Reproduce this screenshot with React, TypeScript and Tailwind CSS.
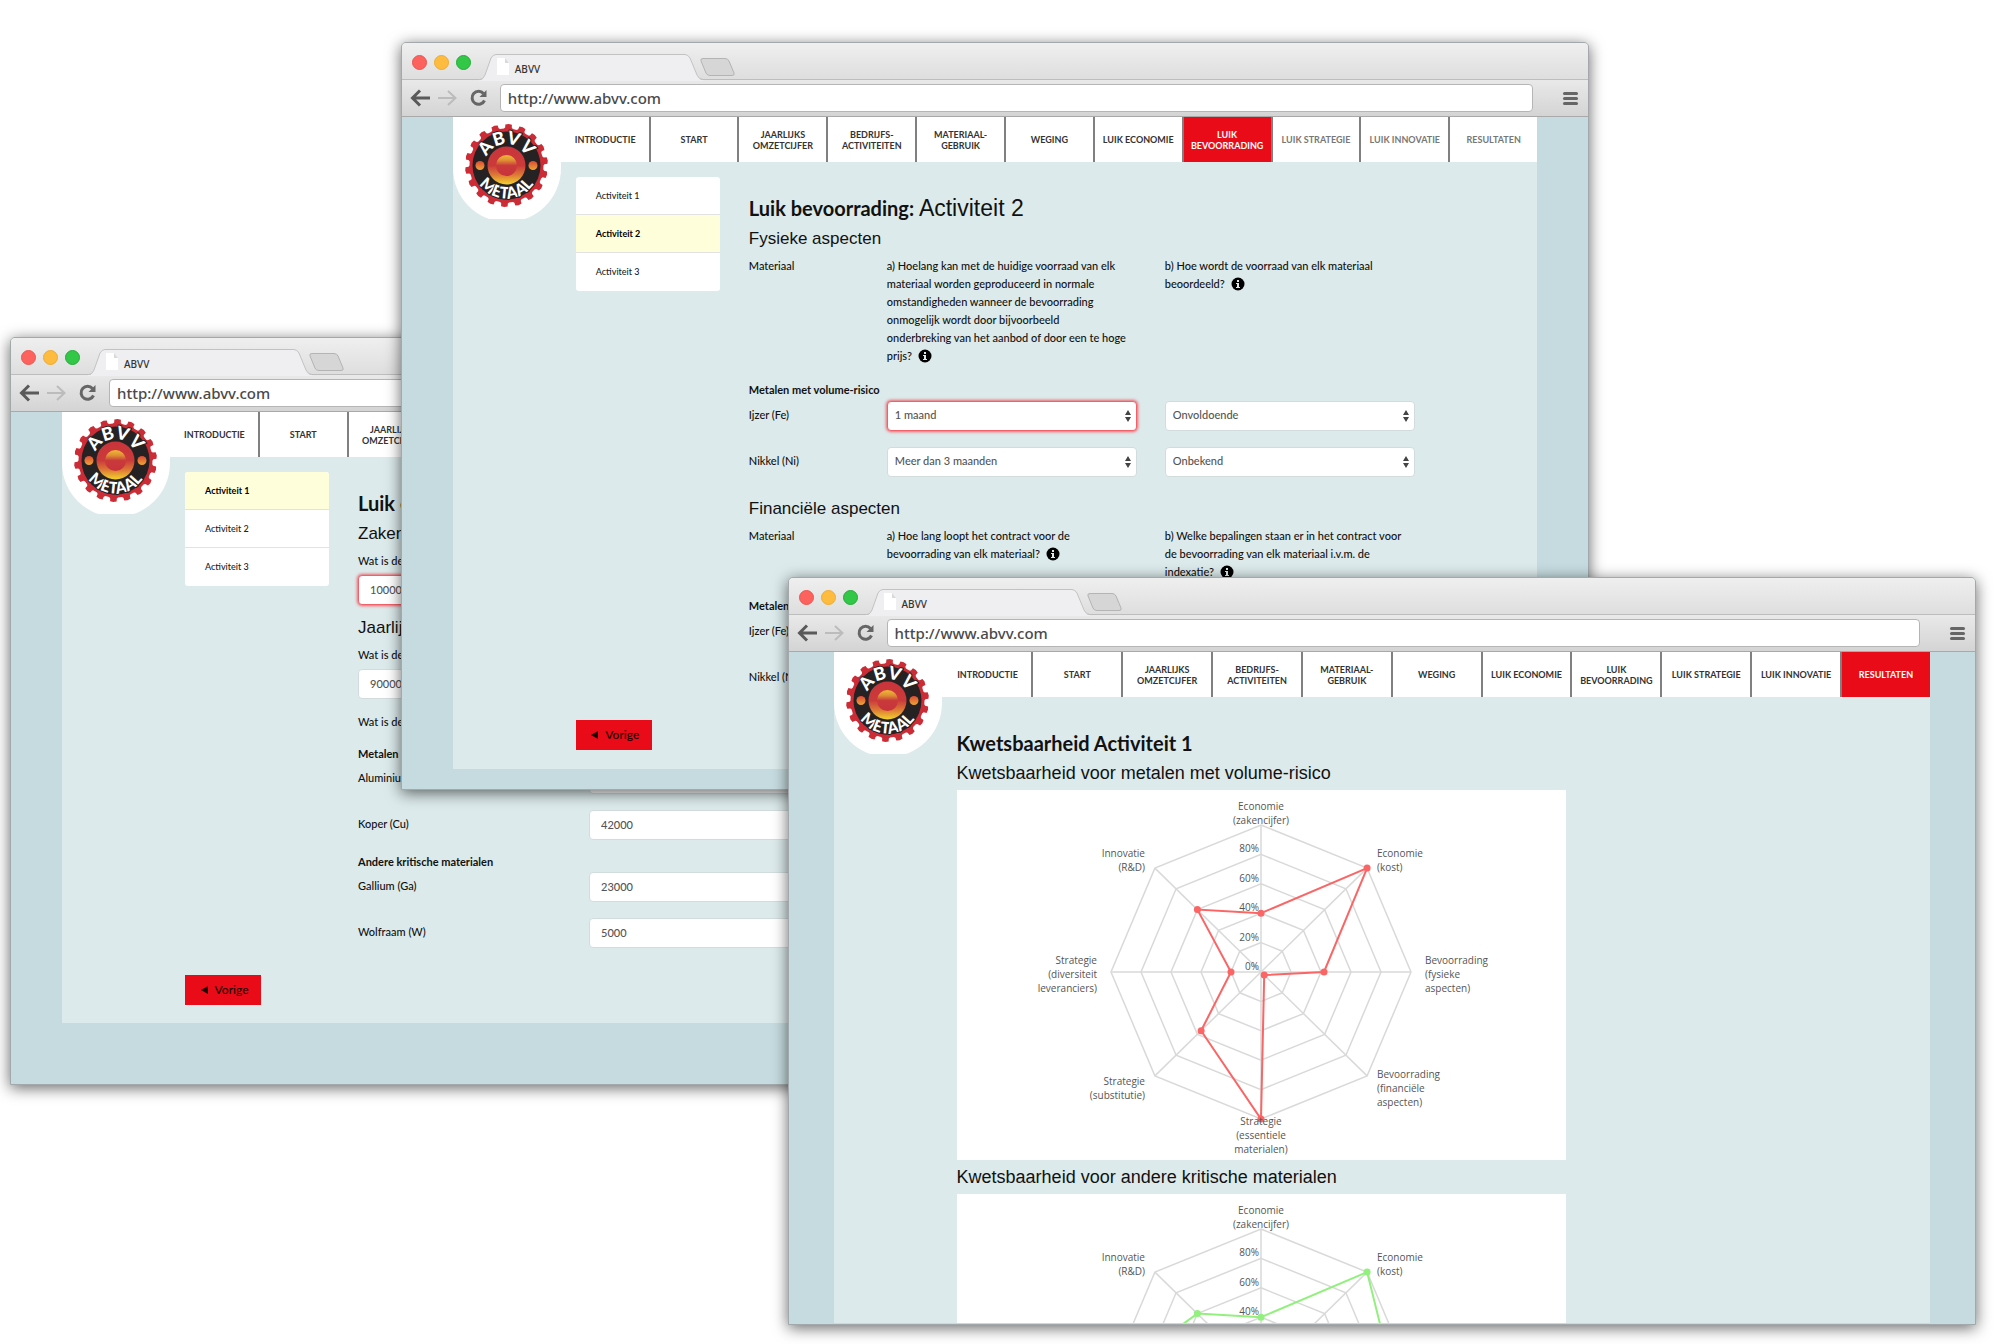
import React from "react";

const NAV = [
  ["INTRODUCTIE"],
  ["START"],
  ["JAARLIJKS", "OMZETCIJFER"],
  ["BEDRIJFS-", "ACTIVITEITEN"],
  ["MATERIAAL-", "GEBRUIK"],
  ["WEGING"],
  ["LUIK ECONOMIE"],
  ["LUIK", "BEVOORRADING"],
  ["LUIK STRATEGIE"],
  ["LUIK INNOVATIE"],
  ["RESULTATEN"],
];

function gearPath(cx: number, cy: number) {
  const teeth = 18;
  const points: string[] = [];
  const at = (r: number, deg: number) => {
    const a = (deg * Math.PI) / 180;
    return `${(cx + r * Math.sin(a)).toFixed(2)} ${(cy - r * Math.cos(a)).toFixed(2)}`;
  };
  for (let i = 0; i < teeth; i++) {
    const mid = 3 + i * 20;
    points.push(at(37, mid - 7), at(38, mid - 5), at(41, mid - 4.6), at(41.6, mid), at(41, mid + 4.6), at(38, mid + 5), at(37, mid + 7));
  }
  return `M${points.join("L")}Z`;
}

function Logo({ id }: { id: string }) {
  return (
    <svg viewBox="0 0 108 102" className="absolute left-0 top-0 h-[102px] w-[108px]" role="img" aria-label="ABVV Metaal">
      <defs>
        <linearGradient id={`${id}-disc`} x1="0" y1="0" x2="0" y2="1">
          <stop offset="0" stopColor="#c9343a" />
          <stop offset="0.5" stopColor="#cb3a3a" />
          <stop offset="0.75" stopColor="#dd7a36" />
          <stop offset="1" stopColor="#f3d22c" />
        </linearGradient>
        <linearGradient id={`${id}-core`} x1="0" y1="0" x2="0" y2="1">
          <stop offset="0" stopColor="#ecbb33" />
          <stop offset="0.25" stopColor="#e09035" />
          <stop offset="0.5" stopColor="#c93a3b" />
          <stop offset="1" stopColor="#c8333b" />
        </linearGradient>
        <linearGradient id={`${id}-dot`} x1="0" y1="0" x2="0" y2="1">
          <stop offset="0" stopColor="#dd4a35" />
          <stop offset="1" stopColor="#eda436" />
        </linearGradient>
        <path id={`${id}-top`} d="M32 48.500A21.500 21.500 0 0 1 75 48.500" />
        <path id={`${id}-bottom`} d="M20.500 48.500A33 33 0 0 0 86.500 48.500" />
        <clipPath id={`${id}-clip`}>
          <rect width="108" height="102" />
        </clipPath>
      </defs>
      <circle cx="54" cy="51" r="54" fill="#fff" clipPath={`url(#${id}-clip)`} />
      <rect width="108" height="52" fill="#fff" />
      <path d={gearPath(53.5, 48.5)} fill="#cb2c35" />
      <circle cx="53.5" cy="48.500" r="34" fill="#262223" />
      <circle cx="53.5" cy="48.500" r="19" fill={`url(#${id}-disc)`} />
      <circle cx="53.5" cy="48.500" r="10.500" fill={`url(#${id}-core)`} />
      <circle cx="27" cy="48.500" r="4.500" fill={`url(#${id}-dot)`} />
      <circle cx="80" cy="48.500" r="4.500" fill={`url(#${id}-dot)`} />
      <g fill="#fff" stroke="#262223" strokeWidth="2" strokeLinejoin="round" className="font-['Lato',sans-serif] font-black" style={{ paintOrder: "stroke" }} textAnchor="middle">
        <text fontSize="18">
          <textPath href={`#${id}-top`} startOffset="50%">ABVV</textPath>
        </text>
        <text fontSize="16">
          <textPath href={`#${id}-bottom`} startOffset="50%">METAAL</textPath>
        </text>
      </g>
    </svg>
  );
}

function BrowserBar() {
  return (
    <header className="shrink-0">
      <div className="relative flex h-[37px] items-center border-b border-[#bdbdbd] bg-linear-to-b from-[#efefef] to-[#dedede] pl-[10px]">
        <div className="flex gap-[7px] pt-[3px]">
          <span className="size-[15px] rounded-full border border-[#f0534e] bg-[#fc635e]" />
          <span className="size-[15px] rounded-full border border-[#f0ac2e] bg-[#fdbb40]" />
          <span className="size-[15px] rounded-full border border-[#1fae36] bg-[#33c748]" />
        </div>
        <svg viewBox="0 0 260 37" className="absolute left-[77px] top-px h-[37px] w-[260px]" aria-hidden="true">
          <path d="M0 36H1Q4 36 6 31L12 14Q14 10 17 10H206Q209 10 211 14L218 31Q220 36 224 36V37H0Z" fill="#efeef0" />
          <path d="M0 35.500H1Q4 35.500 6 31L12 14Q14 10.500 17 10.500H206Q209 10.500 211 14L218 31Q220 35.500 224 35.500" fill="none" stroke="#c2c2c2" />
          <path d="M224 14.500H246Q249 14.500 250 17L255 29Q256 31.500 253 31.500H231Q228 31.500 227 29L222 17Q221 14.500 224 14.500Z" fill="#d6d6d6" stroke="#b4b4b4" />
          <path d="M18 14H26L30 19V31H18Z" fill="#fff" />
          <path d="M26 14V19H30Z" fill="#d9d9d9" />
        </svg>
        <span className="absolute left-[113px] top-[18px] font-['Noto_Sans',sans-serif] text-[10px] leading-4 text-[#333]">ABVV</span>
      </div>
      <div className="flex h-[37px] items-center border-b border-[#a9a9a9] bg-linear-to-b from-[#e9e9e9] to-[#d4d4d4] pl-[8px] pr-[10px]">
        <button type="button" aria-label="Vorige pagina" className="w-[27px]">
          <svg viewBox="0 0 21 18" className="h-[18px] w-[21px]" fill="none" stroke="#5a5a5a" strokeWidth="3">
            <path d="M20 9H3M10 1.500L2.500 9L10 16.500" />
          </svg>
        </button>
        <button type="button" aria-label="Volgende pagina" className="w-[33px]">
          <svg viewBox="0 0 21 18" className="h-[18px] w-[21px]" fill="none" stroke="#bcbcbc" strokeWidth="2">
            <path d="M1 9H18M11 2L18.500 9L11 16" />
          </svg>
        </button>
        <button type="button" aria-label="Vernieuwen" className="w-[30px]">
          <svg viewBox="0 0 18 18" className="size-[18px]" fill="none">
            <path d="M14.500 11.500A6.500 6.500 0 1 1 13.500 4.500" stroke="#666" strokeWidth="3" />
            <path d="M16.500 1V8H9.500Z" fill="#666" />
          </svg>
        </button>
        <input
          aria-label="Adres"
          defaultValue="http://www.abvv.com"
          className="h-[28px] min-w-0 flex-1 rounded-[4px] border border-[#b5b5b5] bg-white px-[7px] font-['Noto_Sans',sans-serif] text-[15px] text-[#4a4a4a]"
        />
        <button type="button" aria-label="Menu" className="ml-[30px] flex w-[15px] flex-col gap-[2px]">
          <span className="h-[3px] rounded-xs bg-[#666]" />
          <span className="h-[3px] rounded-xs bg-[#666]" />
          <span className="h-[3px] rounded-xs bg-[#666]" />
        </button>
      </div>
    </header>
  );
}

function Nav({ id, active, mutedFrom, className = "pl-[107px]" }: { id: string; active: number; mutedFrom: number; className?: string }) {
  return (
    <nav className={`relative flex h-[45px] bg-white ${className}`}>
      <Logo id={id} />
      {NAV.map((lines, i) => (
        <a
          key={lines.join("")}
          href="#"
          className={`flex flex-1 basis-0 flex-col items-center justify-center border-l-2 text-[9px] leading-[11px] font-bold whitespace-nowrap ${i ? "border-[#808080]" : "border-transparent"} ${
            i === active ? "bg-[#e90b18] text-white" : i >= mutedFrom ? "text-[#777]" : "text-[#333]"
          }`}
        >
          {lines.map((l) => (
            <span key={l}>{l}</span>
          ))}
        </a>
      ))}
    </nav>
  );
}

function Win({ className, children }: { className: string; children: React.ReactNode }) {
  return (
    <section className={`absolute flex h-[748px] w-[59.3%] flex-col overflow-hidden rounded-t-[5px] border border-[#a3a9aa] bg-[#c6dbdf] shadow-[0_3px_15px_rgba(0,0,0,0.6)] ${className}`}>
      <BrowserBar />
      {children}
    </section>
  );
}

function Sidebar({ active }: { active: number }) {
  return (
    <ul className="mt-[15px] h-[114px] w-[144px] shrink-0 divide-y divide-[#e2e2e2] overflow-hidden rounded-[3px] bg-white">
      {[1, 2, 3].map((n) => (
        <li key={n} className={`h-[38px] ${n === active ? "bg-[#fffedb] font-bold text-black" : "font-medium text-[#222]"}`}>
          <a href="#" className="flex h-full items-center pl-[20px] text-[9px]">Activiteit {n}</a>
        </li>
      ))}
    </ul>
  );
}

function Title({ children }: { children: React.ReactNode }) {
  return <h1 className="mt-[32px] text-[20px] leading-[28px] font-bold text-[#111]">{children}</h1>;
}

function SubTitle({ children, className = "mt-[5px] text-[17px]" }: { children: React.ReactNode; className?: string }) {
  return <h2 className={`font-['Liberation_Sans',sans-serif] leading-[24px] text-[#111] ${className}`}>{children}</h2>;
}

function Previous() {
  return (
    <button type="button" className="mt-[27px] ml-[123px] flex h-[30px] w-[76px] items-center justify-center gap-[7px] bg-[#e90b18] pl-[3px] text-[12px] font-medium text-[#220000]">
      <svg viewBox="0 0 7 8" className="h-[8px] w-[7px]" aria-hidden="true">
        <path d="M7 0V8L0 4Z" fill="#200" />
      </svg>
      Vorige
    </button>
  );
}

function Info() {
  return (
    <svg viewBox="0 0 14 14" className="ml-[3px] inline size-[14px] align-[-3px]" role="img" aria-label="Info">
      <circle cx="7" cy="7" r="6.500" fill="#000" />
      <path d="M6 3H8V5H6ZM5 6H8V10H9V11H5V10H6V7H5Z" fill="#dceaeb" />
    </svg>
  );
}

function SelectBox({ id, label, value, error = false }: { id: string; label?: string; value: string; error?: boolean }) {
  return (
    <div className="relative">
      <select
        id={id}
        aria-label={label}
        defaultValue={value}
        className={`h-[30px] w-full appearance-none rounded-[4px] border bg-white px-[7px] pb-[2px] text-[11px] font-medium text-[#555] ${
          error ? "border-[#f0616a] shadow-[0_0_3px_1px_#f0616a]" : "border-[#d3dcdd]"
        }`}
      >
        <option>{value}</option>
      </select>
      <svg viewBox="0 0 6 12" className="pointer-events-none absolute top-[9px] right-[6px] h-[12px] w-[6px]" aria-hidden="true">
        <path d="M3 0L6 5H0ZM3 12L6 7H0Z" fill="#444" />
      </svg>
    </div>
  );
}

function TextBox({ id, value, className = "", error = false }: { id: string; value: string; className?: string; error?: boolean }) {
  return (
    <input
      id={id}
      defaultValue={value}
      className={`block h-[30px] rounded-[4px] border bg-white px-[11px] pb-[2px] text-[11px] font-medium text-[#555] ${
        error ? "border-[#f0616a] shadow-[0_0_3px_1px_#f0616a]" : "border-[#d3dcdd]"
      } ${className}`}
    />
  );
}

function Metals({ prefix, rows }: { prefix: string; rows: [string, string, string, boolean][] }) {
  return (
    <>
      <h3 className="mt-[16px] leading-[18px] font-bold">Metalen met volume-risico</h3>
      <div className="mt-[2px] flex flex-col gap-[16px]">
        {rows.map(([name, a, b, error]) => (
          <div key={name} className="grid grid-cols-[138px_278px_250px]">
            <label htmlFor={`${prefix}-${name}`} className="pt-[5px] leading-[18px]">{name}</label>
            <div className="w-[250px]">
              <SelectBox id={`${prefix}-${name}`} value={a} error={error} />
            </div>
            <SelectBox id={`${prefix}-${name}-b`} label={`${name} beoordeling`} value={b} />
          </div>
        ))}
      </div>
    </>
  );
}

function Questions({ a, b }: { a: React.ReactNode; b: React.ReactNode }) {
  return (
    <div className="mt-[6px] grid grid-cols-[138px_278px_250px] leading-[18px]">
      <p>Materiaal</p>
      <p>{a}</p>
      <p>{b}</p>
    </div>
  );
}

function InputRow({ id, name, value }: { id: string; name: string; value: string }) {
  return (
    <div className="grid grid-cols-[231px_250px]">
      <label htmlFor={id} className="pt-[5px] leading-[18px]">{name}</label>
      <TextBox id={id} value={value} />
    </div>
  );
}

const RX = 150;
const RY = 147;
const CX = 304;
const CY = 182;

function spot(i: number, r: number): [number, number] {
  const a = (i * Math.PI) / 4;
  return [Math.round((CX + RX * r * Math.sin(a)) * 10) / 10, Math.round((CY - RY * r * Math.cos(a)) * 10) / 10];
}

const ring = (values: number[]) => values.map((v, i) => spot(i, v).join(",")).join(" ");

const AXES: { x: number; y: number; anchor: "start" | "middle" | "end"; lines: string[] }[] = [
  { x: 304, y: 20, anchor: "middle", lines: ["Economie", "(zakencijfer)"] },
  { x: 420, y: 67, anchor: "start", lines: ["Economie", "(kost)"] },
  { x: 468, y: 174, anchor: "start", lines: ["Bevoorrading", "(fysieke", "aspecten)"] },
  { x: 420, y: 288, anchor: "start", lines: ["Bevoorrading", "(financiële", "aspecten)"] },
  { x: 304, y: 335, anchor: "middle", lines: ["Strategie", "(essentiele", "materialen)"] },
  { x: 188, y: 295, anchor: "end", lines: ["Strategie", "(substitutie)"] },
  { x: 140, y: 174, anchor: "end", lines: ["Strategie", "(diversiteit", "leveranciers)"] },
  { x: 188, y: 67, anchor: "end", lines: ["Innovatie", "(R&D)"] },
];

function Radar({ values, color, label, height, className }: { values: number[]; color: string; label: string; height: number; className: string }) {
  return (
    <svg viewBox={`0 0 609 ${height}`} className={`mt-[5px] block w-[609px] bg-white font-['Open_Sans',sans-serif] ${className}`} role="img" aria-label={label}>
      <g fill="none" stroke="#d9d9d9" strokeWidth="1.500">
        {[0.2, 0.4, 0.6, 0.8, 1].map((r) => (
          <polygon key={r} points={ring(Array(8).fill(r))} />
        ))}
        {AXES.map((_, i) => {
          const [x, y] = spot(i, 1);
          return <line key={i} x1={CX} y1={CY} x2={x} y2={y} />;
        })}
      </g>
      <g fontSize="10" fill="#555">
        {[0, 20, 40, 60, 80]
          .map((p) => ({ p, y: 180 - Math.round(p * 1.47) }))
          .filter(({ y }) => y < height)
          .map(({ p, y }) => (
            <text key={p} x="302" y={y} textAnchor="end">{p}%</text>
          ))}
      </g>
      <polygon points={ring(values)} fill="none" stroke={color} strokeWidth="2" />
      {values.map((v, i) => {
        const [x, y] = spot(i, v);
        return <circle key={i} cx={x} cy={y} r="3.500" fill={color} />;
      })}
      <g fontSize="10" fill="#555">
        {AXES.filter((a) => a.y < height).map((a, i) => (
          <text key={i} textAnchor={a.anchor}>
            {a.lines.map((l, n) => (
              <tspan key={l} x={a.x} y={a.y + n * 14}>{l}</tspan>
            ))}
          </text>
        ))}
      </g>
    </svg>
  );
}

export default function App() {
  return (
    <main className="relative h-[1344px] overflow-hidden bg-white font-['Lato',sans-serif] text-[11px] font-medium text-[#111]">
      <Win className="top-[337px] left-[0.5%]">
        <div className="mx-[51px] bg-[#dceaeb] pb-[18px]">
          <Nav id="economie" active={6} mutedFrom={7} />
          <div className="flex pl-[123px]">
            <Sidebar active={1} />
            <div className="ml-[29px] min-w-0 flex-1">
              <Title>Luik economie: Activiteit 1</Title>
              <SubTitle>Zakencijfer</SubTitle>
              <label htmlFor="zakencijfer" className="mt-[6px] block leading-[18px]">Wat is de omzet van deze activiteit?</label>
              <TextBox id="zakencijfer" value="100000" className="mt-[5px] w-[250px]" error />
              <SubTitle className="mt-[11px] text-[17px]">Jaarlijkse kost</SubTitle>
              <label htmlFor="kost" className="mt-[6px] block leading-[18px]">Wat is de totale kost van de materialen?</label>
              <TextBox id="kost" value="90000" className="mt-[5px] w-[250px]" />
              <p className="mt-[14px] leading-[18px]">Wat is de kost van elk materiaal?</p>
              <h3 className="mt-[14px] leading-[18px] font-bold">Metalen met volume-risico</h3>
              <div className="mt-px flex flex-col gap-[16px]">
                <InputRow id="al" name="Aluminium (Al)" value="15000" />
                <InputRow id="cu" name="Koper (Cu)" value="42000" />
              </div>
              <h3 className="mt-[13px] leading-[18px] font-bold">Andere kritische materialen</h3>
              <div className="mt-px flex flex-col gap-[16px]">
                <InputRow id="ga" name="Gallium (Ga)" value="23000" />
                <InputRow id="w" name="Wolfraam (W)" value="5000" />
              </div>
            </div>
          </div>
          <Previous />
        </div>
      </Win>

      <Win className="top-[42px] left-[20%]">
        <div className="mx-[51px] bg-[#dceaeb] pb-[19px]">
          <Nav id="bevoorrading" active={7} mutedFrom={8} />
          <div className="flex pl-[123px]">
            <Sidebar active={2} />
            <div className="ml-[29px] min-w-0 flex-1">
              <Title>
                Luik bevoorrading: <span className="font-['Liberation_Sans',sans-serif] text-[23px] font-normal">Activiteit 2</span>
              </Title>
              <SubTitle>Fysieke aspecten</SubTitle>
              <Questions
                a={<>a) Hoelang kan met de huidige voorraad van elk<br />materiaal worden geproduceerd in normale<br />omstandigheden wanneer de bevoorrading<br />onmogelijk wordt door bijvoorbeeld<br />onderbreking van het aanbod of door een te hoge<br />prijs? <Info /></>}
                b={<>b) Hoe wordt de voorraad van elk materiaal<br />beoordeeld? <Info /></>}
              />
              <Metals prefix="fysiek" rows={[["Ijzer (Fe)", "1 maand", "Onvoldoende", true], ["Nikkel (Ni)", "Meer dan 3 maanden", "Onbekend", false]]} />
              <SubTitle className="mt-[20px] text-[17px]">Financiële aspecten</SubTitle>
              <Questions
                a={<>a) Hoe lang loopt het contract voor de<br />bevoorrading van elk materiaal? <Info /></>}
                b={<>b) Welke bepalingen staan er in het contract voor<br />de bevoorrading van elk materiaal i.v.m. de<br />indexatie? <Info /></>}
              />
              <Metals prefix="financieel" rows={[["Ijzer (Fe)", "1 maand", "Onbekend", false], ["Nikkel (Ni)", "1 maand", "Onbekend", false]]} />
            </div>
          </div>
          <Previous />
        </div>
      </Win>

      <Win className="top-[577px] left-[39.3%]">
        <div className="mx-[45px] bg-[#dceaeb]">
          <Nav id="resultaten" active={10} mutedFrom={11} className="pl-[108px]" />
          <div className="flex flex-col pl-[123px]">
            <Title>Kwetsbaarheid Activiteit 1</Title>
            <SubTitle className="mt-[4px] text-[18px]">Kwetsbaarheid voor metalen met volume-risico</SubTitle>
            <Radar label="Metalen met volume-risico" color="#fb6565" height={370} className="h-[370px]" values={[0.4, 1, 0.42, 0.03, 1, 0.565, 0.2, 0.6]} />
            <SubTitle className="mt-[5px] text-[18px]">Kwetsbaarheid voor andere kritische materialen</SubTitle>
            <Radar label="Andere kritische materialen" color="#92f07e" height={129} className="h-[129px]" values={[0.4, 1, 0.88, 0.3, 1, 0.5, 1, 0.6]} />
          </div>
        </div>
      </Win>
    </main>
  );
}
